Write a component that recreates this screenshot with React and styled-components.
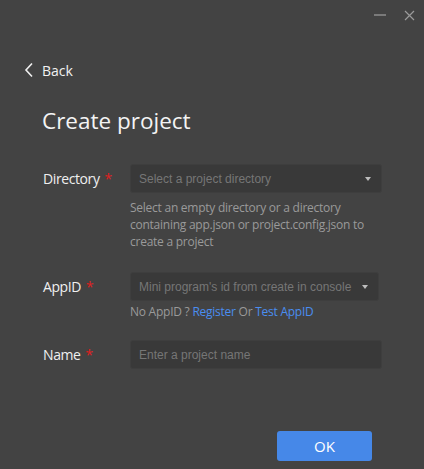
import React from "react";
import styled, { createGlobalStyle } from "styled-components";

const Global = createGlobalStyle`
  html, body { margin: 0; padding: 0; background: #434343; }
  body { font-family: "Open Sans", "Noto Sans", sans-serif; }
  * { box-sizing: border-box; }
`;

const Window = styled.div`
  width: 424px;
  height: 469px;
  background: #434343;
  display: flex;
  flex-direction: column;
  overflow: hidden;
`;

const TitleBar = styled.div`
  height: 30px;
  display: flex;
  justify-content: flex-end;
  align-items: center;
  padding-right: 9px;
  gap: 18px;
`;

const Minimize = styled.div`
  width: 12px;
  height: 2px;
  background: #7a7a7a;
`;

const Body = styled.div`
  padding-left: 24px;
  display: flex;
  flex-direction: column;
`;

const BackRow = styled.div`
  margin-top: 30px;
  height: 20px;
  display: flex;
  align-items: center;
  gap: 8px;
  color: #f2f2f2;
  font-size: 14px;
`;

const Title = styled.h1`
  margin: 26px 0 0 18px;
  font-size: 22.5px;
  line-height: 30px;
  font-weight: 400;
  color: #f4f4f4;
`;

const Form = styled.div`
  margin-left: 19px;
  display: flex;
  flex-direction: column;
`;

const Row = styled.div`
  display: grid;
  grid-template-columns: 87px auto;
  margin-top: ${(p) => p.$top}px;
`;

const Label = styled.div`
  height: 29px;
  display: flex;
  align-items: center;
  color: #f0f0f0;
  font-size: 14px;
  letter-spacing: -0.4px;
`;

const Star = styled.span`
  color: #e02020;
  margin-left: 5px;
`;

const Field = styled.div`
  display: flex;
  flex-direction: column;
`;

const Input = styled.div`
  width: ${(p) => p.$w}px;
  height: 29px;
  background: #393939;
  border: 1px solid #3e3e3e;
  border-radius: 3px;
  display: flex;
  align-items: center;
  justify-content: space-between;
  padding: 0 10px 0 8px;
  color: #767676;
  font-family: "Liberation Sans", Arial, sans-serif;
  font-size: 12px;
  white-space: nowrap;
`;

const Caret = styled.div`
  width: 0;
  height: 0;
  border-left: 3px solid transparent;
  border-right: 3px solid transparent;
  border-top: 4px solid #bdbdbd;
`;

const Help = styled.div`
  margin-top: ${(p) => p.$top}px;
  width: 252px;
  font-size: 12px;
  line-height: 17px;
  letter-spacing: -0.25px;
  color: #9a9a9a;
`;

const Link = styled.span`
  color: #4a8ef0;
`;

const Footer = styled.div`
  display: flex;
  justify-content: flex-end;
  padding-right: 52px;
  margin-top: 62px;
`;

const OkButton = styled.button`
  width: 95px;
  height: 30px;
  border: none;
  border-radius: 3px;
  background: #4688e8;
  color: #fff;
  font-family: inherit;
  font-size: 15px;
`;

export default function App() {
  return (
    <Window>
      <Global />
      <TitleBar>
        <Minimize />
        <svg width="11" height="11" viewBox="0 0 11 11">
          <path d="M1 1L10 10M10 1L1 10" stroke="#9a9a9a" strokeWidth="1.2" />
        </svg>
      </TitleBar>
      <Body>
        <BackRow>
          <svg width="10" height="16" viewBox="0 0 10 16">
            <path d="M8 1.5L2 8l6 6.5" fill="none" stroke="#f0f0f0" strokeWidth="1.6" />
          </svg>
          Back
        </BackRow>
        <Title>Create project</Title>
        <Form>
          <Row $top={28}>
            <Label>
              Directory<Star>*</Star>
            </Label>
            <Field>
              <Input $w={252}>
                Select a project directory
                <Caret />
              </Input>
              <Help $top={6}>
                Select an empty directory or a directory containing app.json or
                project.config.json to create a project
              </Help>
            </Field>
          </Row>
          <Row $top={22}>
            <Label>
              AppID<Star>*</Star>
            </Label>
            <Field>
              <Input $w={249}>
                Mini program's id from create in console
                <Caret />
              </Input>
              <Help $top={2}>
                No AppID ? <Link>Register</Link> Or <Link>Test AppID</Link>
              </Help>
            </Field>
          </Row>
          <Row $top={20}>
            <Label>
              Name<Star>*</Star>
            </Label>
            <Field>
              <Input $w={252}>Enter a project name</Input>
            </Field>
          </Row>
        </Form>
        <Footer>
          <OkButton>OK</OkButton>
        </Footer>
      </Body>
    </Window>
  );
}
